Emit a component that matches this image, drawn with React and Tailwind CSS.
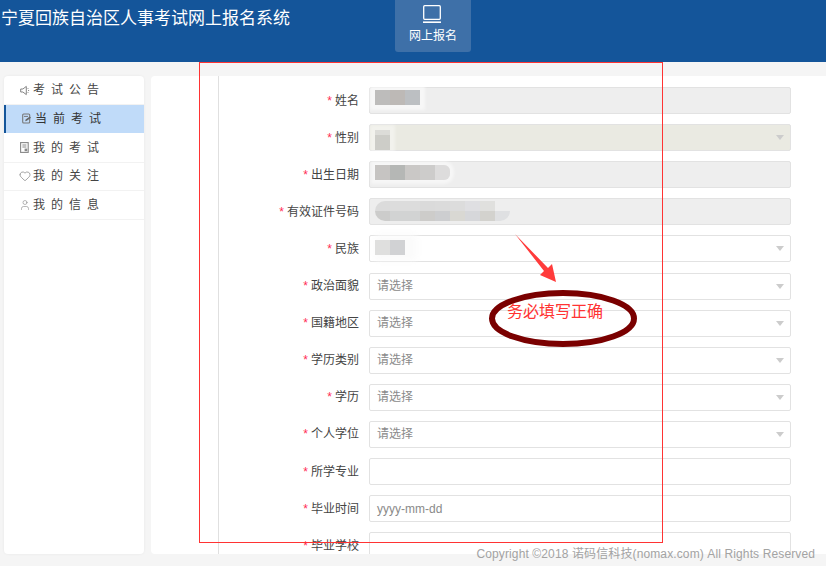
import { Heart, User } from 'lucide-react';

const font = { fontFamily: '"Liberation Sans", "Noto Sans CJK SC", sans-serif' };

const rows = [
  {
    label: '姓名',
    kind: 'disabled',
    patch: [['#bdbcbb', '#bdb9b6', '#bcbfc2']],
    patchClass: 'mb-[6px] shadow-[0_0_3px_5px_rgba(255,255,255,0.55)]',
    cellClasses: ['h-[15px]'],
  },
  {
    label: '性别',
    kind: 'locked',
    patch: [['#dcdcd8'], ['#cdcdc8']],
    patchClass: 'mt-[5px] shadow-[0_0_3px_5px_rgba(255,255,255,0.4)]',
    cellClasses: ['h-[5px]', 'h-[15px]'],
  },
  {
    label: '出生日期',
    kind: 'disabled',
    patch: [['#c6c4c2', '#b5b7b5', '#cac8c6', '#cdcccb', '#dddcdc']],
    patchClass: 'mb-[4px] rounded-r-[6px] shadow-[0_0_3px_4px_rgba(255,255,255,0.5)]',
    cellClasses: ['h-[15px]'],
  },
  {
    label: '有效证件号码',
    kind: 'disabled',
    patch: [
      ['#dbdbdb', '#dcdcdc', '#dcdcdc', '#dadada', '#dbdbdb', '#dcdcdc', '#dfdfe2', '#e0e0de', '#eeeeee'],
      ['#cccccb', '#d2d3d3', '#d2d3d3', '#cdccca', '#cdced0', '#d9d8d3', '#d6d7da', '#d3d2ce', '#dfe0e2'],
    ],
    patchClass: 'mb-[1px] rounded-full',
    cellClasses: ['h-[10px]', 'h-[10px]'],
  },
  {
    label: '民族',
    kind: 'select',
    patch: [['#dfdfde', '#d1d2d4']],
    patchClass: 'mb-[2px] shadow-[6px_0_6px_6px_rgba(250,250,250,0.8)]',
    cellClasses: ['h-[15px]'],
  },
  { label: '政治面貌', kind: 'select', text: '请选择' },
  { label: '国籍地区', kind: 'select', text: '请选择' },
  { label: '学历类别', kind: 'select', text: '请选择' },
  { label: '学历', kind: 'select', text: '请选择' },
  { label: '个人学位', kind: 'select', text: '请选择' },
  { label: '所学专业', kind: 'input' },
  { label: '毕业时间', kind: 'input', text: 'yyyy-mm-dd' },
  { label: '毕业学校', kind: 'input' },
];

function SpeakerIcon() {
  return (
    <svg width="11" height="11" viewBox="0 0 11 11" fill="none" stroke="#777777" strokeWidth="0.9">
      <path d="M0.7 4h2.2l3.4-2.6v8.2L2.9 7H0.7z" />
      <path d="M8 3.2v.8M8.6 5v1M8 7v.8" />
    </svg>
  );
}

function EditIcon() {
  return (
    <svg width="10" height="11" viewBox="0 0 10 11" fill="none">
      <rect x="0.7" y="1" width="7" height="9" rx="1" stroke="#777777" strokeWidth="1.1" />
      <path d="M2 3.4h4" stroke="#777777" />
      <path d="M3.2 8.2l.4-1.6L7.8 3.6l1.2 1.2-4.2 3z" fill="#666666" />
    </svg>
  );
}

function ExamIcon() {
  return (
    <svg width="9" height="11" viewBox="0 0 9 11" fill="none">
      <rect x="0.6" y="0.6" width="7.6" height="9.8" stroke="#888888" strokeWidth="1.1" />
      <path d="M2.4 3h4M2.4 5h4" stroke="#888888" />
      <rect x="4.6" y="6.6" width="2.6" height="2.6" fill="#888888" />
    </svg>
  );
}

const menu = [
  { name: '考试公告', icon: <SpeakerIcon /> },
  { name: '当前考试', icon: <EditIcon />, active: true },
  { name: '我的考试', icon: <ExamIcon /> },
  { name: '我的关注', icon: <Heart size={12} strokeWidth={1.2} className="text-[#666666] -ml-px" /> },
  { name: '我的信息', icon: <User size={12} strokeWidth={1.2} className="text-[#888888] -ml-px" /> },
];

function Row({ row }) {
  const bg =
    row.kind === 'disabled' ? 'bg-[#eeeeee]' : row.kind === 'locked' ? 'bg-[#eaeae2]' : 'bg-white';
  const arrow = row.kind === 'select' || row.kind === 'locked';

  return (
    <div className="flex items-center h-[27px]">
      <div className="w-[140px] text-right text-xs text-[#444444]">
        <span className="text-[#ff2d55] mr-[3px]">*</span>
        {row.label}
      </div>
      <div
        className={`ml-[10px] w-[422px] h-[27px] shrink-0 flex items-center pl-[5px] pr-[6px] border border-[#e2e2e2] rounded-[2px] ${bg}`}
      >
        {row.patch && (
          <div className={`flex flex-col overflow-hidden ${row.patchClass}`}>
            {row.patch.map((cells, i) => (
              <div key={i} className="flex">
                {cells.map((color, j) => (
                  <div
                    key={j}
                    className={`w-[15px] ${row.cellClasses[i]}`}
                    style={{ backgroundColor: color }}
                  />
                ))}
              </div>
            ))}
          </div>
        )}
        {row.text && <span className="ml-[2px] text-xs text-[#8a8a8a]">{row.text}</span>}
        {arrow && (
          <div className="ml-auto w-0 h-0 border-x-[4px] border-x-transparent border-t-[5px] border-t-[#cccccc]" />
        )}
      </div>
    </div>
  );
}

export default function App() {
  return (
    <div className="relative w-[826px] h-[566px] overflow-hidden bg-[#f5f5f5] flex flex-col" style={font}>
      <header className="h-[62px] shrink-0 bg-[#14559a] flex items-start text-white">
        <div className="w-[395px] pl-px pt-[9px] text-[17px] leading-[20px]">
          宁夏回族自治区人事考试网上报名系统
        </div>
        <div className="w-[76px] h-[52px] bg-[#3e70a8] rounded-b-[3px] flex flex-col items-center pt-[5px]">
          <svg className="mr-[3px]" width="18" height="18" viewBox="0 0 18 18" fill="none" stroke="white">
            <rect x="0.7" y="0.7" width="16.6" height="13.6" rx="1" strokeWidth="1.3" />
            <path d="M0 17.2h18" strokeWidth="1.6" />
          </svg>
          <span className="mt-[5px] text-xs leading-[16px]">网上报名</span>
        </div>
      </header>

      <div className="flex gap-[7px] pl-[4px] pt-[14px] h-[492px]">
        <nav className="w-[140px] bg-white rounded-[4px] shadow-[0_0_3px_rgba(0,0,0,0.06)]">
          {menu.map(({ name, icon, active }) => (
            <div
              key={name}
              className={`h-[28px] mb-[0.75px] flex items-center text-xs ${
                active
                  ? 'bg-[#c0dbf9] border-l-2 border-[#14559a] pl-[16px] text-[#333333]'
                  : 'pl-[16px] text-[#444444] shadow-[0_1px_0_#f2f2f2]'
              }`}
            >
              <span className="w-[13px] shrink-0 flex">{icon}</span>
              <span className="tracking-[6px]">{name}</span>
            </div>
          ))}
        </nav>

        <main className="flex-1 bg-white rounded-l-[4px] pl-[67px] overflow-hidden">
          <div className="border-l border-[#e0e0e0] h-full pt-[11px] flex flex-col gap-[10.12px]">
            {rows.map((row) => (
              <Row key={row.label} row={row} />
            ))}
          </div>
        </main>
      </div>

      {/* annotations drawn over the form */}
      <div className="absolute left-[199px] top-[62px] w-[464px] h-[481px] border border-[#ff3333]" />
      <svg className="absolute left-0 top-0" width="826" height="566" fill="none">
        <path d="M515 234L548 268L552 264L556 282L540 275L544 271Z" fill="#ff3b3b" />
        <ellipse cx="563" cy="318.5" rx="71" ry="25.5" stroke="#7a0000" strokeWidth="6" />
      </svg>
      <div className="absolute left-[507px] top-[301px] text-base leading-[22px] text-[#ff3333]">务必填写正确</div>
      <div className="absolute right-[11px] top-[546px] text-xs leading-[16px] tracking-[0.12px] text-[#a3a3a3]">
        Copyright ©2018 诺码信科技(nomax.com) All Rights Reserved
      </div>
    </div>
  );
}
